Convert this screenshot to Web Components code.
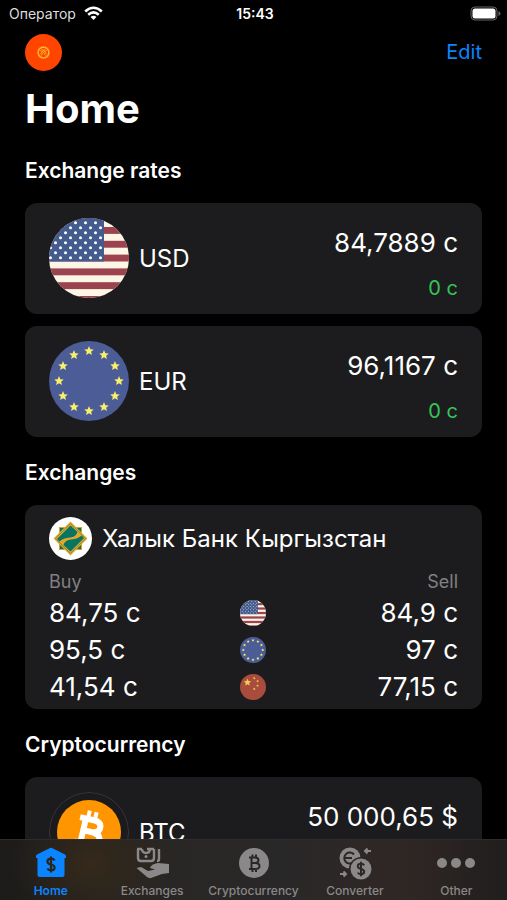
<!DOCTYPE html>
<html lang="en">
<head>
<meta charset="utf-8">
<meta name="viewport" content="width=device-width, initial-scale=1">
<title>Home</title>
<style>
    body{
        margin: 0;
        background: #000;
        color: #fff;
        font-family: Inter, "Noto Sans", sans-serif;
    }
</style>
</head>
<body>
<app-shell>
    <status-bar slot="top" carrier="Оператор" time="15:43"></status-bar>
    <home-header>Home</home-header>

    <page-section heading="Exchange rates">
        <rate-card code="USD" value="84,7889 с" change="0 с"></rate-card>
        <rate-card code="EUR" value="96,1167 с" change="0 с"></rate-card>
    </page-section>

    <page-section heading="Exchanges">
        <exchange-card rates="USD:84,75:84,9;EUR:95,5:97;CNY:41,54:77,15">Халык Банк Кыргызстан</exchange-card>
    </page-section>

    <page-section heading="Cryptocurrency">
        <rate-card code="BTC" value="50 000,65 $"></rate-card>
    </page-section>

    <tab-bar slot="bottom">
        <tab-item icon="home" active>Home</tab-item>
        <tab-item icon="exchanges">Exchanges</tab-item>
        <tab-item icon="crypto">Cryptocurrency</tab-item>
        <tab-item icon="converter">Converter</tab-item>
        <tab-item icon="other">Other</tab-item>
    </tab-bar>
</app-shell>

<script>
// five pointed star around cx, cy
function star(cx, cy, r, turn = 0) {
    let points = []
    for (let i = 0; i < 10; i++) {
        const radius = i % 2 ? r * 0.45 : r
        const a = Math.PI * i / 5 - Math.PI / 2 + turn
        points.push((cx + radius * Math.cos(a)).toFixed(2) + ',' + (cy + radius * Math.sin(a)).toFixed(2))
    }
    return `<polygon points="${points.join(' ')}"/>`
}

function usFlag() {
    let stripes = ''
    for (let i = 0; i < 7; i++) {
        stripes += `<rect y="${-4.8 + i * 13.8}" width="80" height="6.9" fill="#9b4450"/>`
    }
    // the stars are too small for points, dots look the same
    let stars = ''
    for (let row = 0; row < 8; row++) {
        for (let x = row % 2 ? 1.5 : 6.5; x < 54; x += 10) {
            stars += `<circle cx="${x}" cy="${4.7 + row * 5}" r="1.5"/>`
        }
    }
    return `<rect width="80" height="80" fill="#fdf5e6"/>${stripes}
        <rect width="55" height="43.5" fill="#435b8d"/><g fill="#fff">${stars}</g>`
}

function euFlag() {
    let stars = ''
    for (let i = 0; i < 12; i++) {
        const a = Math.PI * i / 6
        stars += star(40 + 30 * Math.sin(a), 40 - 30 * Math.cos(a), 5)
    }
    return `<rect width="80" height="80" fill="#4c5c97"/><g fill="#f8f06c">${stars}</g>`
}

function cnFlag() {
    return `<rect width="80" height="80" fill="#a84c3e"/>
        <g fill="#f8c94c">${star(23, 26, 12)}${star(44, 13, 4.5, .4)}${star(54, 22, 4.5, .8)}${star(54, 36, 4.5)}${star(44, 46, 4.5, .4)}</g>`
}

function kgFlag() {
    let rays = ''
    for (let i = 0; i < 20; i++) {
        rays += `<path d="M38.5 29 40 25.5 41.5 29Z" transform="rotate(${i * 18} 40 40)"/>`
    }
    return `<rect width="80" height="80" fill="#ff4500"/><g fill="#ffb52e">${rays}</g>
        <circle cx="40" cy="40" r="11.5" fill="none" stroke="#ffb52e" stroke-width="3"/>
        <path d="M32 35Q41 37 45 47M35 32Q44 36 47 44M48 35Q39 37 35 47M45 32Q36 36 33 44" fill="none" stroke="#ffb52e" stroke-width="1.8"/>`
}

function btcCoin() {
    return `<circle cx="40" cy="40" r="39.5" fill="#1b1b1d" stroke="#3a3a3c"/>
        <circle cx="40" cy="40" r="32" fill="#ff9500"/>
        <g transform="rotate(13 40 40)" fill="none" stroke="#fff">
            <path d="M28 27.5H42Q50 27.5 50 33.5T42 39.5H35M42 39.5Q52 39.5 52 46T42 52.5H28M34 27.5V52.5" stroke-width="6"/>
            <path d="M36 19V28M43 19V28M36 52V61M43 52V61" stroke-width="4"/>
        </g>`
}

const flags = { USD: usFlag, EUR: euFlag, CNY: cnFlag, KGS: kgFlag, BTC: btcCoin }

const dollar = 'M4 -4.5Q3 -6.5 0 -6.5Q-4 -6.5 -4 -3.4Q-4 -1 0 0Q4 1 4 3.4Q4 6.5 0 6.5Q-3 6.5 -4 4.5M0 -9V9'

const icons = {
    home: `<path fill="currentColor" d="M16 2Q17 1.500 18 2L31 8.500Q32 9 32 10V12H30.500V29Q30.500 31 28.500 31H5.500Q3.500 31 3.500 29V12H2V10Q2 9 3 8.500Z"/>
        <path d="${dollar}" transform="translate(17 18.500) scale(.9)" fill="none" stroke="#2b241b" stroke-width="2.400"/>`,
    exchanges: `<g fill="none" stroke="currentColor" stroke-width="2.400">
            <path d="M3 3V12Q3 15 6 15H16Q19 15 19 12V3M2 3H7M12 3H19M24 3V13Q24 15 22 15"/>
            <path d="M7 3Q7 7 11 7T15 3"/>
        </g>
        <circle cx="11" cy="10.500" r="1.500" fill="currentColor"/>
        <path fill="currentColor" d="M1.500 22 6 21 13 25 20 23.500 15 22Q16 18 23 17L34 18V27L27 28 16 32Q14 32.500 12 31Z"/>`,
    crypto: `<circle cx="17" cy="17" r="15" fill="currentColor"/>
        <path d="M12 11.500H18Q21.500 11.500 21.500 14.200T18 17H14.500M18 17Q22.500 17 22.500 20T18 23H12M14.500 11.500V23M15.500 8.500V11.500M19 8.500V11.500M15.500 23V26M19 23V26" fill="none" stroke="#292828" stroke-width="2"/>`,
    converter: `<circle cx="12" cy="12" r="10.500" fill="currentColor"/>
        <path d="M16 8.500A5.500 5.500 0 1 0 15 16.500M7 12H14" fill="none" stroke="#2b2827" stroke-width="2"/>
        <circle cx="23" cy="23" r="12" fill="#2b2827"/>
        <circle cx="23" cy="23" r="10.500" fill="currentColor"/>
        <path d="${dollar}" transform="translate(23 23) scale(.8)" fill="none" stroke="#2b2827" stroke-width="2.500"/>
        <path d="M33 5H27M29.500 2.500 27 5 29.500 7.500M2 28H8M5.500 25.500 8 28 5.500 30.500" fill="none" stroke="currentColor" stroke-width="2"/>`,
    other: `<g fill="currentColor"><circle cx="3" cy="17" r="5"/><circle cx="17" cy="17" r="5"/><circle cx="31" cy="17" r="5"/></g>`
}

class AppShell extends HTMLElement
{
    constructor(){
        super()
        this.attachShadow({mode: 'open'}).innerHTML = `
            <style>
            :host{
                display: flex;
                flex-direction: column;
                height: 100vh;
            }
            main{
                flex: 1;
                min-height: 0;
                overflow-y: auto;
                scrollbar-width: none;
                padding: 0 25px;
            }
            </style>
            <slot name="top"></slot>
            <main><slot></slot></main>
            <slot name="bottom"></slot>
        `
    }
}

class StatusBar extends HTMLElement
{
    connectedCallback(){
        this.attachShadow({mode: 'open'}).innerHTML = `
            <style>
            :host{
                display: grid;
                grid-template-columns: 1fr auto 1fr;
                align-items: center;
                height: 27px;
                padding: 0 6px 0 9px;
                font-size: 14px;
            }
            .carrier{
                display: flex;
                align-items: center;
                gap: 8px;
                color: #ddd;
            }
            .time{
                font-weight: 600;
            }
            .battery{
                justify-self: end;
            }
            svg{
                display: block;
            }
            </style>
            <div class="carrier">${this.getAttribute('carrier')}
                <svg width="19" height="15" viewBox="0 0 19 15" fill="none" stroke="#fff" stroke-width="2.600">
                    <path d="M1.200 5.500Q9.500 -2 17.800 5.500M4.200 8.700Q9.500 4 14.800 8.700"/>
                    <path d="M6.500 11Q9.500 8.500 12.500 11L9.500 14Z" fill="#fff" stroke="none"/>
                </svg>
            </div>
            <div class="time">${this.getAttribute('time')}</div>
            <svg class="battery" width="31" height="15" viewBox="0 0 31 15">
                <rect x="1" y="1" width="26" height="13" rx="4" fill="none" stroke="#666"/>
                <rect x="2.500" y="2.500" width="23" height="10" rx="2.500" fill="#fff"/>
                <path d="M28.500 5Q30.500 6 30.500 7.500T28.500 10Z" fill="#666"/>
            </svg>
        `
    }
}

class CurrencyFlag extends HTMLElement
{
    connectedCallback(){
        this.attachShadow({mode: 'open'}).innerHTML = `
            <style>
            :host{
                display: block;
                flex: none;
                width: var(--flag-size, 80px);
                height: var(--flag-size, 80px);
                border-radius: 50%;
                overflow: hidden;
            }
            svg{
                display: block;
                width: 100%;
                height: 100%;
            }
            </style>
            <svg viewBox="0 0 80 80" aria-hidden="true">${flags[this.getAttribute('code')]()}</svg>
        `
    }
}

class HomeHeader extends HTMLElement
{
    constructor(){
        super()
        this.attachShadow({mode: 'open'}).innerHTML = `
            <style>
            :host{
                display: block;
            }
            .nav{
                display: flex;
                align-items: center;
                justify-content: space-between;
                height: 50px;
            }
            button{
                border: 0;
                padding: 0;
                background: none;
                color: #0a84ff;
                font: inherit;
                font-size: 20px;
            }
            currency-flag{
                --flag-size: 37px;
            }
            h1{
                margin: 0;
                padding-top: 6px;
                font-size: 40px;
                line-height: 52px;
                font-weight: 700;
            }
            </style>
            <div class="nav">
                <button type="button" aria-label="Country"><currency-flag code="KGS"></currency-flag></button>
                <button type="button">Edit</button>
            </div>
            <h1><slot></slot></h1>
        `
    }
}

class PageSection extends HTMLElement
{
    connectedCallback(){
        this.attachShadow({mode: 'open'}).innerHTML = `
            <style>
            :host{
                display: block;
            }
            h2{
                margin: 0;
                padding: 22px 0 18px;
                font-size: 21px;
                line-height: 28px;
                font-weight: 600;
            }
            .cards{
                display: flex;
                flex-direction: column;
                gap: 12px;
            }
            </style>
            <h2>${this.getAttribute('heading')}</h2>
            <div class="cards"><slot></slot></div>
        `
    }
}

class RateCard extends HTMLElement
{
    connectedCallback(){
        const code = this.getAttribute('code')
        const change = this.getAttribute('change') || ''
        this.attachShadow({mode: 'open'}).innerHTML = `
            <style>
            :host{
                display: flex;
                align-items: center;
                gap: 10px;
                padding: 15px 24px 16px;
                border-radius: 12px;
                background: #1c1c1e;
            }
            .code{
                flex: 1;
                font-size: 24px;
            }
            .numbers{
                display: flex;
                flex-direction: column;
                justify-content: space-between;
                align-self: stretch;
                padding-top: 8px;
                text-align: right;
            }
            .value{
                font-size: 26px;
                line-height: 34px;
            }
            .change{
                color: #34c759;
                font-size: 20px;
                line-height: 20px;
            }
            </style>
            <currency-flag code="${code}"></currency-flag>
            <div class="code">${code}</div>
            <div class="numbers">
                <div class="value">${this.getAttribute('value')}</div>
                <div class="change">${change}</div>
            </div>
        `
    }
}

class ExchangeCard extends HTMLElement
{
    connectedCallback(){
        const rows = this.getAttribute('rates').split(';').map(rate => {
            const [code, buy, sell] = rate.split(':')
            return `<tr><td>${buy} с</td><td><currency-flag code="${code}"></currency-flag></td><td>${sell} с</td></tr>`
        }).join('')
        this.attachShadow({mode: 'open'}).innerHTML = `
            <style>
            :host{
                display: block;
                padding: 12px 24px 4px;
                border-radius: 12px;
                background: #1c1c1e;
            }
            .bank{
                display: flex;
                align-items: center;
                gap: 10px;
                margin-bottom: 10px;
                font-size: 24px;
            }
            table{
                width: 100%;
                table-layout: fixed;
                border-collapse: collapse;
            }
            th, td{
                padding: 0;
                text-align: left;
            }
            th{
                height: 24px;
                color: #808084;
                font-size: 18px;
                line-height: 24px;
                font-weight: 400;
            }
            td{
                height: 37px;
                font-size: 26px;
                line-height: 37px;
            }
            th:last-child, td:last-child{
                text-align: right;
            }
            currency-flag{
                --flag-size: 26px;
                margin: 0 auto;
            }
            </style>
            <div class="bank">
                <svg width="43" height="43" viewBox="0 0 43 43" aria-hidden="true">
                    <circle cx="21.500" cy="21.500" r="21.500" fill="#fff"/>
                    <rect x="10.500" y="10.500" width="22" height="22" fill="#087562" stroke="#d9a328"/>
                    <path d="M21.500 4.500 38.500 21.500 21.500 38.500 4.500 21.500Z" fill="#e3a62a"/>
                    <path d="M21.500 6.500 36.500 21.500 21.500 36.500 6.500 21.500Z" fill="none" stroke="#6d8a45" stroke-width=".8"/>
                    <path d="M21.500 8.500 28.500 15Q27 20 21 20.500Q14 21 10.500 24.500L8 22Z" fill="#087562"/>
                    <path d="M21.500 34.500 14.500 28Q16 23 22 22.500Q29 22 32.500 18.500L35 21Z" fill="#087562"/>
                </svg>
                <slot></slot>
            </div>
            <table>
                <thead><tr><th>Buy</th><th></th><th>Sell</th></tr></thead>
                <tbody>${rows}</tbody>
            </table>
        `
    }
}

class TabBar extends HTMLElement
{
    constructor(){
        super()
        this.attachShadow({mode: 'open'}).innerHTML = `
            <style>
            :host{
                display: block;
                background:
                    radial-gradient(ellipse 80px 60px at 18% 40%, #35291a, transparent),
                    linear-gradient(90deg, #1c1b1a, #292725 35%, #292828 55%, #302725 80%, #201e1e);
            }
            nav{
                display: flex;
                height: 61px;
                box-sizing: border-box;
                border-top: 1px solid #2e2d2d;
            }
            </style>
            <nav><slot></slot></nav>
        `
    }
}

class TabItem extends HTMLElement
{
    connectedCallback(){
        this.attachShadow({mode: 'open'}).innerHTML = `
            <style>
            :host{
                display: block;
                flex: 1 1 0;
                min-width: 0;
                color: #8a8888;
            }
            :host([active]){
                color: #0a84ff;
            }
            a{
                display: flex;
                flex-direction: column;
                align-items: center;
                gap: 3px;
                padding-top: 6px;
                color: inherit;
                font-size: 12px;
                line-height: 16px;
                font-weight: 500;
                text-decoration: none;
                white-space: nowrap;
            }
            :host([active]) a{
                font-weight: 600;
            }
            svg{
                overflow: visible;
            }
            </style>
            <a href="#${this.getAttribute('icon')}">
                <svg width="34" height="34" viewBox="0 0 34 34" aria-hidden="true">${icons[this.getAttribute('icon')]}</svg>
                <span><slot></slot></span>
            </a>
        `
    }
}

window.customElements.define('app-shell', AppShell)
window.customElements.define('status-bar', StatusBar)
window.customElements.define('currency-flag', CurrencyFlag)
window.customElements.define('home-header', HomeHeader)
window.customElements.define('page-section', PageSection)
window.customElements.define('rate-card', RateCard)
window.customElements.define('exchange-card', ExchangeCard)
window.customElements.define('tab-bar', TabBar)
window.customElements.define('tab-item', TabItem)
</script>
</body>
</html>
